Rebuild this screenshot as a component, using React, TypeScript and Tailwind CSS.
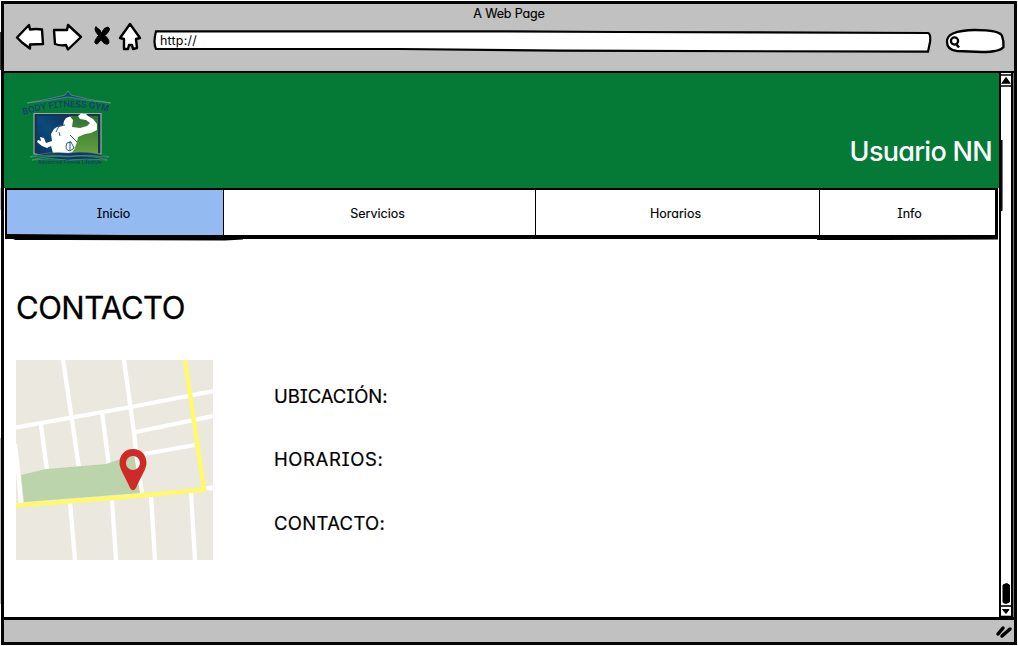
import React from "react";

const font =
  "font-['Inter','Open_Sans',sans-serif] [font-feature-settings:'cv11','cv08','ss03','calt'_0]";

function NavIcons() {
  return (
    <svg className="h-9 w-[130px] shrink-0" viewBox="14 19 130 36" fill="white" stroke="black" strokeWidth="2.4" strokeLinejoin="round" strokeLinecap="round">
      <path d="M17 37.5 L29 25 L30 29.5 Q36 28.5 42 29.5 L43 44 L30 44.5 L30 48.5 L22 42.5 Z" />
      <path d="M54 30 L67 30 L68 25 L81 37 L68 49.5 L66 45 Q60 46 55 44 Z" />
      <path d="M96 27 Q101 30 101.5 33 Q104 27 108 27 Q112 29 105 35.5 Q111 41 108 44 Q104 45 101 39.5 Q97 46 95 43 Q94 41 98.5 35.5 Q93 29 96 27 Z" fill="black" stroke="black" strokeWidth="1" />
      <path d="M130 24 L140 38 L136 39 L137 48 L133 49 L132 45 L129 45 L128 49 L124 49 L124 39 L120 38 Z" />
    </svg>
  );
}

function AddressBar() {
  return (
    <div className="relative h-6 w-[779px] shrink-0">
      <svg className="absolute inset-0 h-6 w-[779px]" viewBox="153 29 779 24" fill="white" stroke="black" strokeWidth="2.2">
        <path d="M156 31.3 L500 31.3 L620 32 L928 33 Q931 34 930 42 L928 51.7 L560 50.7 L400 49 L156 49 Q153 43 156 31.3 Z" />
      </svg>
      <span className="absolute left-[7px] top-[4px] text-[12.5px] leading-4 tracking-[0.2px]">http://</span>
    </div>
  );
}

function SearchBox() {
  return (
    <svg className="h-7 w-[62px] shrink-0" viewBox="944 27 62 28" fill="white" stroke="black" strokeWidth="2.3">
      <path d="M947 42 Q946 30.5 975 30 Q1000 30 1002 36 Q1004 41 1003.5 47 Q1000 52 982 52 L957 51 Q947 50 947 42 Z" />
      <circle cx="954.5" cy="41" r="3.6" />
      <path d="M956 44 L959 47.5" strokeWidth="2.6" />
    </svg>
  );
}

function Logo() {
  return (
    <svg className="h-[78px] w-[92px]" viewBox="21 90 92 78">
      <defs>
        <linearGradient id="blue" x1="0" y1="1" x2="1" y2="0">
          <stop offset="0" stopColor="#0a3461" />
          <stop offset="0.5" stopColor="#0b4a7b" />
          <stop offset="1" stopColor="#102f56" />
        </linearGradient>
        <linearGradient id="green" x1="0" y1="0" x2="0" y2="1">
          <stop offset="0" stopColor="#2f7030" />
          <stop offset="1" stopColor="#63a13e" />
        </linearGradient>
        <path id="arc" d="M23.5 115 Q66 101 109 112" />
      </defs>
      <path d="M27 103 Q50 99 65 95 L68 91 L71 95 Q88 100 111 103 Q88 101 68 97 Q48 101 27 103Z" fill="#164a78" stroke="#8aa9a0" strokeWidth=".5" />
      <text fontSize="9" fontWeight="600" fill="#123f73" textLength="86" lengthAdjust="spacingAndGlyphs">
        <textPath href="#arc">BODY FITNESS GYM</textPath>
      </text>
      <path d="M34 113.5 L101 113.5 L101 154 L34 154Z" fill="#17344f" stroke="#9cac9e" strokeWidth="1.2" />
      <path d="M37 116 H70 V154 H37Z" fill="url(#blue)" />
      <path d="M70 116 H98 V154 H70Z" fill="url(#green)" />
      <path d="M53 153 L51 146 L47 148 L42 146 L37 142 L38 140 L41 141 L40 137 L44 138 L46 143 L52 141 L51 134 L54 129 L57 127 L63 126 L64 121 L66 118 L70 116.5 L73 120 L72 127 L80 128 L87 126 L90 123 L86 120 L80 119 L78 116 L81 113.5 L86 114 L88 116 L93 119 L97 124 L97 130 L91 133 L85 134 L78 137 L77 142 L74 150 L71 153Z" fill="white" />
      <path d="M56 132 L59 126 L65 125 M59 132 L60 136 M70 135 L77 142 M67 143 Q64 150 70 151 L74 148 L71 142 Z M70 141 V151" fill="none" stroke="#24618a" strokeWidth="1" />
      <path d="M30 157 Q48 151 68 153 Q89 150 109 157 Q89 154 68 156 Q47 154 30 157Z M32 160 Q50 155 68 157 Q88 154 107 160 Q88 158 68 160 Q50 157 32 160Z" fill="#0a3966" stroke="#93aa9e" strokeWidth=".4" />
      <text x="38" y="164" fontSize="5" fontWeight="600" fill="#173f61" textLength="64" lengthAdjust="spacingAndGlyphs">Advanced Fitness Lifestyle</text>
    </svg>
  );
}

function CityMap() {
  return (
    <svg className="h-[200px] w-[197px]" viewBox="0 0 197 200">
      <path d="M0 0H197V200H0Z" fill="#ebe8e0" />
      <g fill="none" stroke="white" strokeWidth="4.3">
        <path d="M0 67.5 L115 47 L197 31 M120 72 L197 56 M128 94 L179 85 M-1 84 Q2 108 5 144" />
        <path d="M47 0 L56 60 L63 108 M108 0 L118 73 L125 135 M25 65 L31 110 M86 52 L93 106" />
        <path d="M54 142 L59 200 M96 140 L100 200 M135 136 L139 200 M175 132 L179 200 M185 128 H197" />
      </g>
      <path d="M5 115 L30 109 L90 104 L118 94 L124 133 L8 142Z" fill="#bcd4ac" />
      <path d="M120 96 H122 L125 132 L128 132 L122 96Z" fill="white" />
      <path d="M0 145.5 L110 137 L188 129.5 L169 0" fill="none" stroke="#fff96b" strokeWidth="4.5" />
      <path fillRule="evenodd" d="M117 89 C109 89 103.5 95 103.5 103 C103.5 109 109 116 114 128 Q117 132.5 120 128 C125 116 130.5 109 130.5 103 C130.5 95 125 89 117 89ZM117 96 A7 7 0 1 1 116.9 96Z" fill="#cf2a27" />
    </svg>
  );
}

function Scrollbar() {
  return (
    <div className="flex w-[12px] shrink-0 flex-col items-center justify-between border-l-2 border-black bg-white">
      <svg className="h-[14px] w-[10px]" viewBox="0 0 10 14">
        <path d="M0 2 H10 M0 13 H10" stroke="black" strokeWidth="1.6" />
        <path d="M5 5 L8.5 10 H1.5Z" fill="black" stroke="black" strokeWidth="1.5" />
      </svg>
      <svg className="h-9 w-[10px]" viewBox="0 0 10 36">
        <path d="M2 4 Q6 1 8.5 4 V21 Q5 23.5 2 21.5Z" fill="black" stroke="black" />
        <path d="M0 25 H10" stroke="black" strokeWidth="1.6" />
        <path d="M1.5 28.5 H8 L5 32.5Z" fill="black" stroke="black" />
        <path d="M0 35.5 H10" stroke="black" strokeWidth="1.6" />
      </svg>
    </div>
  );
}

const tab = "flex items-center justify-center pt-[3px] text-[12.5px] [-webkit-text-stroke:0.15px_black]";

export default function App() {
  return (
    <div className={`relative h-[646px] w-[1018px] overflow-hidden bg-white pb-px pl-px pr-px pt-px text-black ${font}`}>
      <div className="flex h-[644px] flex-col border-[3px] border-[#050505] bg-[#c1c1c1]">
        <header className="h-[67px] shrink-0">
          <h1 className="h-5 pt-[2px] text-center text-[12.5px] leading-4 tracking-[-0.15px] [-webkit-text-stroke:0.15px_black]">A Web Page</h1>
          <div className="-mt-[5px] flex items-center pl-[10px]">
            <NavIcons />
            <div className="ml-[9px] mt-[7px]"><AddressBar /></div>
            <div className="ml-3 mt-[7px]"><SearchBox /></div>
          </div>
        </header>

        <div className="flex h-[549px] shrink-0 border-b-[3px] border-t-[2px] border-black bg-white">
          <main className="flex min-w-0 flex-1 flex-col">
            <section className="flex h-[115px] shrink-0 items-start justify-between bg-[#057a37] pl-[17px] pr-[7px] pt-[17px]">
              <Logo />
              <span className="mt-[44px] text-[27px] font-medium leading-9 tracking-[-0.7px] text-white">Usuario NN</span>
            </section>
            <nav className="relative ml-px mr-px grid h-[51px] shrink-0 grid-cols-[216px_312px_284px_1fr] border-b-[4px] border-l-2 border-r-[3px] border-t-2 border-black bg-white">
              <a className={`${tab} bg-[#94baf2] pr-[3px]`}>Inicio</a>
              <a className={`${tab} border-l-[1.5px] border-black pr-[4px]`}>Servicios</a>
              <a className={`${tab} border-l-[1.5px] border-black pr-[4px]`}>Horarios</a>
              <a className={`${tab} border-l-[1.5px] border-black`}><span className="ml-1">Info</span></a>
              <svg className="absolute -left-0.5 top-[44px] h-[7px] w-[994px]" viewBox="0 0 994 7">
                <path d="M0 0 L10 6 L58 6 L220 6.5 L238 5.5 V2Z M812 2 H993 V5.5 L880 6 L812 6Z" fill="black" />
              </svg>
            </nav>
            <section className="flex flex-col pl-3 pt-[49px]">
              <h2 className="text-[31px] leading-10 tracking-[-0.5px] [-webkit-text-stroke:0.3px_black]">CONTACTO</h2>
              <div className="mt-8 flex">
                <CityMap />
                <div className="ml-[61px] flex flex-col gap-[39.5px] pt-6 text-[18.5px] leading-6 [-webkit-text-stroke:0.2px_black]">
                  <p className="tracking-[-0.1px]">UBICACIÓN:</p>
                  <p className="-mt-px mb-px tracking-[0.6px]">HORARIOS:</p>
                  <p className="tracking-[0.3px]">CONTACTO:</p>
                </div>
              </div>
            </section>
          </main>
          <Scrollbar />
          <div className="w-[3px] border-l-2 border-black bg-[#777]" />
        </div>

        <footer className="flex flex-1 items-center justify-end pr-px">
          <svg className="h-4 w-[18px]" viewBox="0 0 18 16" fill="none" stroke="black" strokeWidth="3.5" strokeLinecap="round">
            <path d="M3 11 L8 5 M7 13 L15 6" />
          </svg>
        </footer>
      </div>
      <svg className="pointer-events-none absolute left-0 top-0 h-[646px] w-[1018px]" viewBox="0 0 1018 646">
        <path d="M1 32 V70 M1.5 188 V209 L4 209 M1.5 438 V604" fill="none" stroke="black" strokeWidth="1.5" />
        <path d="M1001.8 140 V210 L1000 211" fill="none" stroke="black" strokeWidth="1.5" />
      </svg>
    </div>
  );
}
